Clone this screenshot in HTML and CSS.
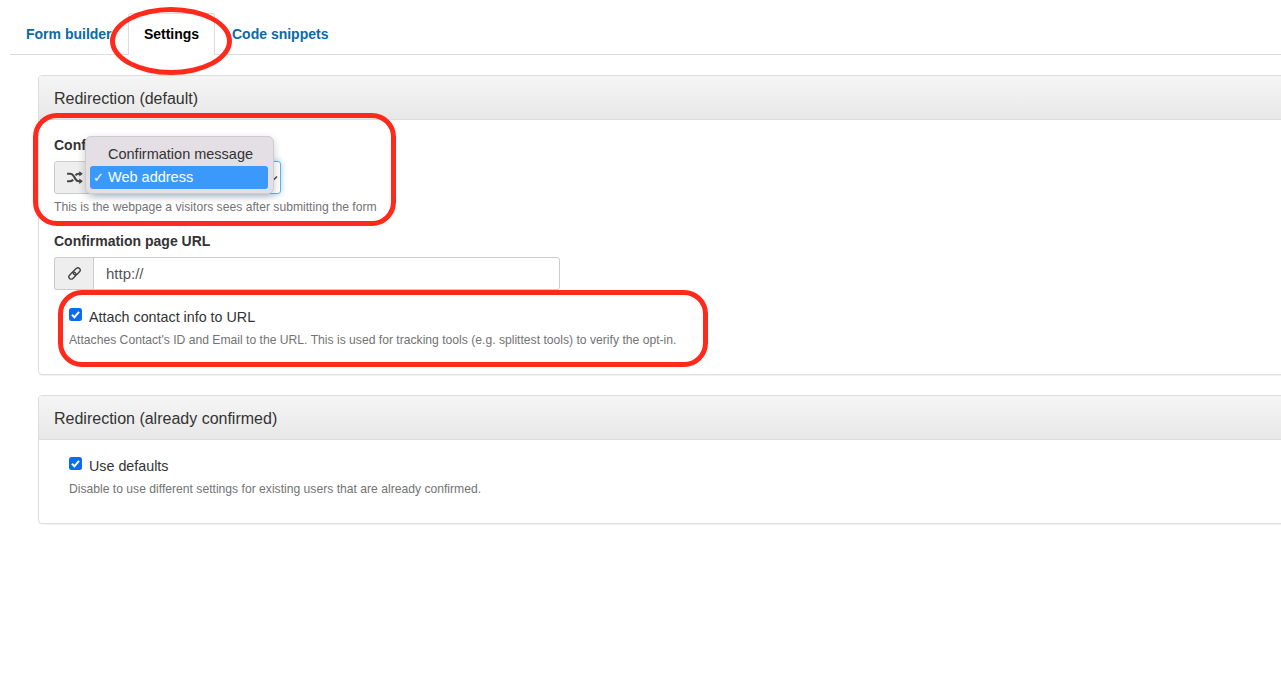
FILE: index.html
```html
<!DOCTYPE html>
<html lang="en">
<head>
<meta charset="utf-8">
<title>Form settings</title>
<link rel="stylesheet" href="styles.css">
</head>
<body>
<nav class="tabs">
  <a class="tab">Form builder</a>
  <a class="tab active">Settings</a>
  <a class="tab">Code snippets</a>
</nav>
<main class="content">
  <section class="panel first">
    <h2 class="panel-head">Redirection (default)</h2>
    <div class="panel-body">
      <div class="field">
        <div class="label">Confirmation page</div>
        <div class="group select-group">
          <span class="addon">
            <svg class="icon" viewBox="0 0 16 16" width="17" height="17"><path d="M1 4.500h3c1.500 0 2.500.8 3.500 2.500l1.500 2.500c.8 1.400 1.700 2 3 2h2M1 11.500h3c1.200 0 2-.5 2.700-1.500M9 6c.7-1 1.700-1.500 3-1.500h2" fill="none" stroke="#444" stroke-width="2"/><path d="M12.500 2l3.300 2.500-3.300 2.500zM12.500 9l3.300 2.500-3.300 2.500z" fill="#444"/></svg>
          </span>
          <span class="select-control">
            <span class="select-value">Web address</span>
            <svg class="caret" viewBox="0 0 8 6" width="8" height="6"><path d="M1 1.500l3 3 3-3" fill="none" stroke="#444" stroke-width="1.500"/></svg>
          </span>
        </div>
        <p class="help">This is the webpage a visitors sees after submitting the form</p>
      </div>
      <div class="field url-field">
        <div class="label">Confirmation page URL</div>
        <div class="group url-group">
          <span class="addon">
            <svg class="icon" viewBox="0 0 16 16" width="15" height="15"><g fill="none" stroke="#444" stroke-width="1.500" transform="rotate(-45 8 8)"><rect x="0.500" y="5.500" width="8.500" height="5" rx="2.500"/><rect x="7" y="5.500" width="8.500" height="5" rx="2.500"/></g></svg>
          </span>
          <span class="input-value">http://</span>
        </div>
      </div>
      <div class="check-block attach">
        <label class="check"><span class="box"><svg viewBox="0 0 13 13" width="13" height="13"><path d="M3 6.800l2.400 2.500L10 3.800" fill="none" stroke="#fff" stroke-width="2"/></svg></span>Attach contact info to URL</label>
        <p class="help">Attaches Contact's ID and Email to the URL. This is used for tracking tools (e.g. splittest tools) to verify the opt-in.</p>
      </div>
    </div>
  </section>
  <section class="panel second">
    <h2 class="panel-head">Redirection (already confirmed)</h2>
    <div class="panel-body second-body">
      <div class="check-block defaults">
        <label class="check"><span class="box"><svg viewBox="0 0 13 13" width="13" height="13"><path d="M3 6.800l2.400 2.500L10 3.800" fill="none" stroke="#fff" stroke-width="2"/></svg></span>Use defaults</label>
        <p class="help">Disable to use different settings for existing users that are already confirmed.</p>
      </div>
    </div>
  </section>
</main>
<div class="menu">
  <div class="menu-item">Confirmation message</div>
  <div class="menu-item selected"><span class="tick">✓</span>Web address</div>
</div>
<div class="mark mark-tab"></div>
<div class="mark mark-select"></div>
<div class="mark mark-attach"></div>
</body>
</html>
```
FILE: styles.css
```css
* { box-sizing: border-box; }
html, body { margin: 0; height: 679px; overflow: hidden; background: #fff; }
body { font-family: "Liberation Sans", Arial, sans-serif; color: #333; position: relative; }

.tabs { display: flex; margin: 13px 0 0 10px; height: 42px; border-bottom: 1px solid #ddd; width: 1271px; }
.tab { font-size: 14px; font-weight: 700; color: #0a6aa6; padding: 0 15px; line-height: 41px; border: 1px solid transparent; border-bottom: 0; height: 42px; white-space: nowrap; }
.tab:first-child { width: 118px; }
.tab.active { color: #000; background: #fff; border-color: #ddd; width: 87px; text-align: center; padding: 0; border-radius: 3px 3px 0 0; }
.tab:last-child { padding-left: 16px; }

.content { padding: 20px 0 0 38px; width: 1300px; }
.panel { border: 1px solid #ddd; border-radius: 4px; box-shadow: 0 1px 1px rgba(0,0,0,.05); }
.panel.first { height: 300px; margin-bottom: 20px; }
.panel.second { height: 129px; }
.panel-head { margin: 0; height: 44px; padding: 0 15px; font-size: 16px; font-weight: 400; line-height: 45px; color: #333; background: linear-gradient(#f5f5f5, #e8e8e8); border-bottom: 1px solid #ddd; border-radius: 3px 3px 0 0; }
.panel-body { padding: 16px 15px 0; }
.second-body { padding-top: 17px; }

.field { margin-bottom: 18px; }
.url-field { margin-bottom: 8px; }
.label { font-size: 14px; font-weight: 700; line-height: 18px; color: #333; margin-bottom: 7px; }
.group { display: flex; align-items: center; height: 33px; border-radius: 3px; background: #fff; }
.select-group { width: 227px; }
.url-group { width: 506px; border: 1px solid #ccc; }
.url-group .addon { margin-left: -1px; }
.addon { width: 40px; height: 33px; flex: none; display: flex; align-items: center; justify-content: center; background: #eee; border: 1px solid #ccc; border-radius: 3px 0 0 3px; }
.select-control { flex: 1; height: 33px; display: flex; align-items: center; justify-content: space-between; margin-left: -1px; padding-right: 2px; border: 1px solid #66afe9; border-radius: 0 3px 3px 0; box-shadow: 0 0 6px rgba(102,175,233,.6); }
.select-value, .input-value { color: #555; padding-left: 12px; }
.select-value { font-size: 14px; }
.input-value { font-size: 15px; }
.help { margin: 0; font-size: 12.150px; line-height: 14px; color: #737373; white-space: nowrap; }
.field .help { margin-top: 6px; }

.check-block { padding-left: 15px; }
.attach { padding-top: 10px; }
.attach .check { margin-bottom: 7px; }
.check { display: flex; align-items: center; font-size: 14.300px; line-height: 18px; color: #333; margin-bottom: 7px; }
.box { width: 13px; height: 13px; background: #0b6cf0; border-radius: 2.500px; margin: -6px 7px 0 0; flex: none; display: block; }
.box svg { display: block; }

.menu { position: absolute; left: 85px; top: 136px; width: 189px; height: 58px; padding: 6px 5px 6px 4px; background: #e4dfe4; border: 1px solid #cfcbcf; border-radius: 6px; box-shadow: 0 3px 8px rgba(0,0,0,.2); font-size: 14.500px; }
.menu-item { height: 23px; line-height: 23px; padding-left: 18px; color: #333; border-radius: 3px; position: relative; }
.menu-item.selected { background: #3b99fc; color: #fff; }
.tick { position: absolute; left: 3px; top: 0; font-size: 13px; font-weight: 700; font-family: "DejaVu Sans", sans-serif; }

.mark { position: absolute; border: 5px solid #ff2a1c; pointer-events: none; }
.mark-tab { left: 110px; top: 7px; width: 122px; height: 68px; border-radius: 50%; }
.mark-select { left: 33px; top: 113px; width: 363px; height: 113px; border-radius: 24px; }
.mark-attach { left: 58px; top: 290px; width: 650px; height: 77px; border-radius: 24px; }
```
